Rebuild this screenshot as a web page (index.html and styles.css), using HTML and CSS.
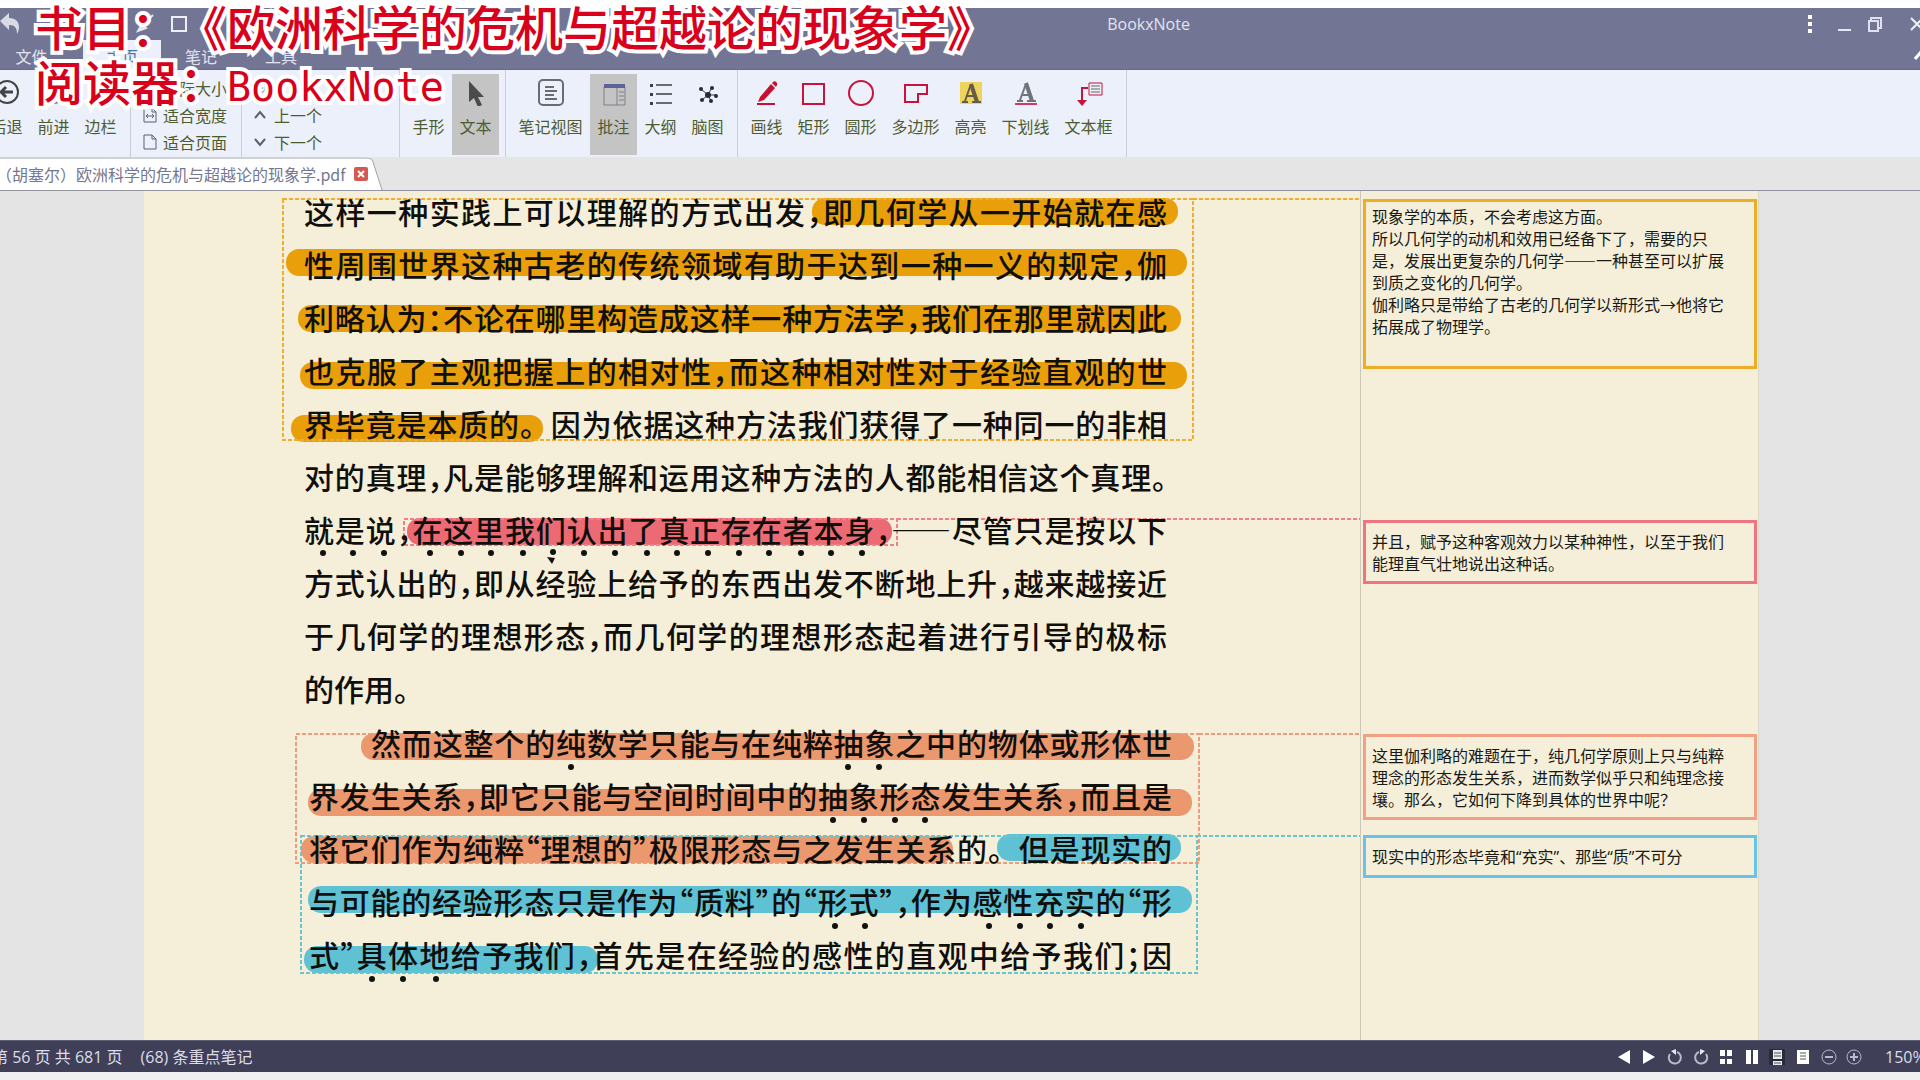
FILE: index.html
```html
<!DOCTYPE html>
<html lang="zh-CN">
<head>
<meta charset="utf-8">
<title>BookxNote</title>
<link rel="stylesheet" href="styles.css">
</head>
<body>
<header class="titlebar">
  <div class="caption-row">
    <div class="quick">
      <button class="bare" aria-label="撤销"><svg width="20" height="22" viewBox="0 0 20 22"><path d="M0 8L9 0v5c7 0 10 4 10 9 0 3-1 5-2 7 0-6-2-9-8-9v5z" fill="#d9dae6"/></svg></button>
      <button class="bare" aria-label="画笔"><svg width="18" height="20" viewBox="0 0 18 20"><path d="M17 1L9 9M2 17l4-7 4 4z" stroke="#e4e5ef" stroke-width="2" fill="#e4e5ef"/></svg></button>
      <button class="bare" aria-label="矩形"><svg width="18" height="18" viewBox="0 0 18 18"><rect x="2" y="2" width="14" height="14" fill="none" stroke="#eef0f8" stroke-width="2"/></svg></button>
    </div>
    <h1 class="app-name">BookxNote</h1>
    <div class="window-controls">
      <button class="bare" aria-label="菜单"><svg width="8" height="20" viewBox="0 0 8 20"><path d="M2 1h4v4H2zM2 8h4v4H2zM2 15h4v4H2z" fill="#fff"/></svg></button>
      <button class="bare" aria-label="最小化"><svg width="14" height="18" viewBox="0 0 14 18"><path d="M0 15h13" stroke="#e6e8f2" stroke-width="2"/></svg></button>
      <button class="bare" aria-label="还原"><svg width="14" height="18" viewBox="0 0 14 18"><path d="M1 6h9v10H1zM3 5V3h10v10h-2" fill="none" stroke="#dfe1ee" stroke-width="2"/></svg></button>
      <button class="bare" aria-label="关闭"><svg width="14" height="14" viewBox="0 0 14 14"><path d="M1 1l12 12M13 1L1 13" stroke="#eef0f8" stroke-width="2"/></svg></button>
    </div>
  </div>
  <nav class="menu">
    <a href="#file">文件</a><a href="#home" class="active">主页</a><a href="#notes">笔记</a><a href="#tools">工具</a>
    <button class="bare collapse" aria-label="收起"><svg width="14" height="10" viewBox="0 0 14 10"><path d="M1 9l6-7 6 7" fill="none" stroke="#fff" stroke-width="3"/></svg></button>
  </nav>
</header>

<div class="toolbar">
  <div class="group first">
    <button class="tool"><svg width="28" height="28" viewBox="0 0 28 28"><circle cx="14" cy="14" r="11" fill="none" stroke="#444" stroke-width="2"/><path d="M20 14H9M13 9l-5 5 5 5" fill="none" stroke="#444" stroke-width="3"/></svg>后退</button>
    <button class="tool"><svg width="28" height="28" viewBox="0 0 28 28"><circle cx="14" cy="14" r="11" fill="none" stroke="#888" stroke-width="2"/><path d="M8 14h11M15 9l5 5-5 5" fill="none" stroke="#888" stroke-width="3"/></svg>前进</button>
    <button class="tool"><svg width="28" height="28" viewBox="0 0 28 28"><path d="M4 5h20v19H4zM10 5v19" fill="none" stroke="#777" stroke-width="2"/></svg>边栏</button>
  </div>
  <div class="group stack fit">
    <button class="row"><svg width="14" height="16" viewBox="0 0 14 16"><path d="M1 1h8l4 4v10H1z" fill="none" stroke="#5a6072"/></svg>实际大小</button>
    <button class="row"><svg width="14" height="16" viewBox="0 0 14 16"><path d="M1 1h8l4 4v10H1zM9 1v4h4M3 9h8M5 7L3 9l2 2M9 7l2 2-2 2" fill="none" stroke="#5a6072"/></svg>适合宽度</button>
    <button class="row"><svg width="14" height="16" viewBox="0 0 14 16"><path d="M1 1h8l4 4v10H1zM9 1v4h4" fill="none" stroke="#5a6072"/></svg>适合页面</button>
  </div>
  <div class="group stack step">
    <button class="row" aria-label="缩小"><svg width="12" height="12" viewBox="0 0 12 12"><circle cx="6" cy="6" r="5" fill="none" stroke="#7389a8"/><path d="M3 6h6" stroke="#7389a8"/></svg></button>
    <button class="row"><svg width="12" height="12" viewBox="0 0 12 12"><path d="M1 9l5-6 5 6" fill="none" stroke="#5a6072" stroke-width="2"/></svg>上一个</button>
    <button class="row"><svg width="12" height="12" viewBox="0 0 12 12"><path d="M1 3l5 6 5-6" fill="none" stroke="#5a6072" stroke-width="2"/></svg>下一个</button>
  </div>
  <div class="group">
    <button class="tool"><svg width="28" height="28" viewBox="0 0 28 28"><path d="M8 20c2 7 11 7 13 0V9M8 20L4 13M10 15V6M14 13V4M18 13V6" fill="none" stroke="#777" stroke-width="2"/></svg>手形</button>
    <button class="tool on"><svg width="28" height="28" viewBox="0 0 28 28"><path d="M7 3v21l5-4 4 9 4-2-4-8h6z" fill="#4b4b4b"/></svg>文本</button>
  </div>
  <div class="group">
    <button class="tool w4"><svg width="28" height="28" viewBox="0 0 28 28"><rect x="2" y="2" width="24" height="25" rx="4" fill="none" stroke="#6a6c72" stroke-width="2"/><path d="M8 9h9M8 13h12M8 17h9M8 21h12" stroke="#6a6c72" stroke-width="2"/></svg>笔记视图</button>
    <button class="tool on"><svg width="28" height="28" viewBox="0 0 28 28"><path d="M4 9h21v18H4zM17 9v18M19 14h5M19 18h5M19 22h5" fill="none" stroke="#808088"/><path d="M4 6h21v4H4z" fill="#5f6296"/></svg>批注</button>
    <button class="tool"><svg width="28" height="28" viewBox="0 0 28 28"><path d="M9 7h16M9 16h16M9 25h16" stroke="#696b70" stroke-width="2"/><path d="M3 6h3v3H3zM3 15h3v3H3zM3 24h3v3H3z" fill="#3d3f45"/></svg>大纲</button>
    <button class="tool"><svg width="28" height="28" viewBox="0 0 28 28"><path d="M7 11l7 6 4-8M22 17h-8l3 6M8 22l6-5" stroke="#333840" fill="none"/><g fill="#252a33"><circle cx="14" cy="17" r="3"/><circle cx="7" cy="11" r="2"/><circle cx="18" cy="10" r="2"/><circle cx="22" cy="18" r="2"/><circle cx="17" cy="23" r="2"/><circle cx="8" cy="22" r="2"/></g></svg>脑图</button>
  </div>
  <div class="group">
    <button class="tool"><svg width="28" height="28" viewBox="0 0 28 28"><path d="M7 19L18 6l4 4-11 12-6 2zM19 5l1-1c2-2 5 1 4 3l-1 2z" fill="#c8102e"/><path d="M4 26h18" stroke="#c8102e" stroke-width="2"/></svg>画线</button>
    <button class="tool"><svg width="28" height="28" viewBox="0 0 28 28"><rect x="3" y="6" width="21" height="20" fill="none" stroke="#c8143c" stroke-width="2"/></svg>矩形</button>
    <button class="tool"><svg width="28" height="28" viewBox="0 0 28 28"><circle cx="14" cy="15" r="12" fill="none" stroke="#c8143c" stroke-width="2"/></svg>圆形</button>
    <button class="tool w3"><svg width="28" height="28" viewBox="0 0 28 28"><path d="M3 7h22v9h-9v8H3z" fill="none" stroke="#c8143c" stroke-width="2"/></svg>多边形</button>
    <button class="tool"><svg width="28" height="28" viewBox="0 0 28 28"><path d="M3 4h22v22H3z" fill="#eed45c"/><path d="M5 24h6M15 24h9M8 23l6-17M10 18h8" fill="none" stroke="#665d48" stroke-width="2"/><path d="M14 6l6 18" stroke="#665d48" stroke-width="4"/></svg>高亮</button>
    <button class="tool w3"><svg width="28" height="28" viewBox="0 0 28 28"><path d="M5 23h6M15 23h9M8 22l6-16M10 17h8" fill="none" stroke="#70737a" stroke-width="2"/><path d="M14 5l6 18" stroke="#70737a" stroke-width="4"/><path d="M3 26h22" stroke="#d9365a" stroke-width="2"/></svg>下划线</button>
    <button class="tool w3"><svg width="28" height="28" viewBox="0 0 28 28"><path d="M14 5h13v12H14z" fill="none" stroke="#c8143c"/><path d="M16 8h9M16 11h9M16 14h9" stroke="#666"/><path d="M13 10H7v13" fill="none" stroke="#c8143c" stroke-width="2"/><path d="M2 22h10l-5 6z" fill="#c8143c"/></svg>文本框</button>
  </div>
</div>

<div class="tabs">
  <div class="tab">
    <svg class="tab-shape" width="384" height="33" viewBox="0 0 384 33"><path d="M0 0h366c4 0 6 2 7 5l9 28H0z" fill="#fff"/><path d="M0 1h366c4 0 6 1 7 4l9 28" fill="none" stroke="#a2a3ac"/></svg>
    <a href="#doc" class="tab-name">（胡塞尔）欧洲科学的危机与超越论的现象学.pdf</a>
    <button class="bare tab-close" aria-label="关闭标签"><svg width="14" height="14" viewBox="0 0 14 14"><rect width="14" height="14" rx="2" fill="#d25a50"/><path d="M4 4l6 6M10 4l-6 6" stroke="#fff" stroke-width="2"/></svg></button>
  </div>
</div>

<main class="viewport">
  <article class="page">
    <svg class="marks" width="1217" height="848" viewBox="144 192 1217 848">
      <g fill="#e99f0a"><rect x="812" y="198" width="366" height="27" rx="13"/><rect x="286" y="249" width="901" height="27" rx="13"/><rect x="298" y="305" width="883" height="27" rx="13"/><rect x="300" y="362" width="887" height="27" rx="13"/><rect x="291" y="415" width="252" height="27" rx="13"/></g>
      <rect x="407" y="518" width="485" height="27" rx="13" fill="#ec6a74"/>
      <g fill="#eb986e"><rect x="361" y="733" width="833" height="27" rx="13"/><rect x="308" y="789" width="884" height="27" rx="13"/><rect x="301" y="836" width="652" height="27" rx="13"/></g>
      <g fill="#5fc2d4"><rect x="997" y="834" width="184" height="27" rx="13"/><rect x="308" y="886" width="884" height="27" rx="13"/><rect x="304" y="946" width="294" height="27" rx="13"/></g>
      <g fill="none" stroke-width="2" stroke-dasharray="4 2">
        <path d="M283 199h910v241H283zM1193 199h168" stroke="#eeae35"/>
        <path d="M404 519h493v26H404zM897 519h464" stroke="#ef8088"/>
        <path d="M296 734h903v129H296zM1199 734h162" stroke="#ee9c7c"/>
        <path d="M301 836h896v137H301zM1197 836h164" stroke="#67c7cf"/>
      </g>
      <g fill="#111">
        <circle cx="323" cy="553" r="3"/><circle cx="353" cy="553" r="3"/><circle cx="384" cy="553" r="3"/><circle cx="430" cy="553" r="3"/><circle cx="461" cy="553" r="3"/><circle cx="491" cy="553" r="3"/><circle cx="523" cy="553" r="3"/><circle cx="553" cy="552" r="3"/><circle cx="584" cy="553" r="3"/><circle cx="615" cy="553" r="3"/><circle cx="647" cy="553" r="3"/><circle cx="677" cy="553" r="3"/><circle cx="708" cy="553" r="3"/><circle cx="739" cy="553" r="3"/><circle cx="769" cy="553" r="3"/><circle cx="801" cy="553" r="3"/><circle cx="831" cy="553" r="3"/><circle cx="862" cy="553" r="3"/><path d="M547 557l8 1-3 6z"/>
        <circle cx="571" cy="767" r="3"/><circle cx="848" cy="767" r="3"/><circle cx="879" cy="767" r="3"/>
        <circle cx="833" cy="820" r="3"/><circle cx="864" cy="820" r="3"/><circle cx="895" cy="820" r="3"/><circle cx="925" cy="820" r="3"/>
        <circle cx="835" cy="926" r="3"/><circle cx="865" cy="926" r="3"/><circle cx="989" cy="926" r="3"/><circle cx="1020" cy="926" r="3"/><circle cx="1050" cy="926" r="3"/><circle cx="1081" cy="926" r="3"/>
        <circle cx="372" cy="979" r="3"/><circle cx="403" cy="979" r="3"/><circle cx="436" cy="979" r="3"/>
      </g>
    </svg>
    <p class="para lead">
      <span class="line">这样一种实践上可以理解的方式出发，即几何学从一开始就在感</span>
      <span class="line">性周围世界这种古老的传统领域有助于达到一种一义的规定，伽</span>
      <span class="line">利略认为：不论在哪里构造成这样一种方法学，我们在那里就因此</span>
      <span class="line">也克服了主观把握上的相对性，而这种相对性对于经验直观的世</span>
      <span class="line">界毕竟是本质的<span class="stop">。</span>因为依据这种方法我们获得了一种同一的非相</span>
      <span class="line">对的真理，凡是能够理解和运用这种方法的人都能相信这个真理。</span>
      <span class="line">就是说，在这里我们认出了真正存在者本身，——尽管只是按以下</span>
      <span class="line">方式认出的，即从经验上给予的东西出发不断地上升，越来越接近</span>
      <span class="line">于几何学的理想形态，而几何学的理想形态起着进行引导的极标</span>
      <span class="line last">的作用。</span>
    </p>
    <p class="para">
      <span class="line indent">然而这整个的纯数学只能与在纯粹抽象之中的物体或形体世</span>
      <span class="line">界发生关系，即它只能与空间时间中的抽象形态发生关系，而且是</span>
      <span class="line">将它们作为纯粹“理想的”极限形态与之发生关系的<span class="stop">。</span>但是现实的</span>
      <span class="line">与可能的经验形态只是作为“质料”的“形式”，作为感性充实的“形</span>
      <span class="line">式”具体地给予我们，首先是在经验的感性的直观中给予我们；因</span>
    </p>
  </article>
  <aside class="notes">
    <section class="note amber">现象学的本质，不会考虑这方面。<br>所以几何学的动机和效用已经备下了，需要的只是，发展出更复杂的几何学——一种甚至可以扩展到质之变化的几何学。<br>伽利略只是带给了古老的几何学以新形式→他将它拓展成了物理学。</section>
    <section class="note red">并且，赋予这种客观效力以某种神性，以至于我们能理直气壮地说出这种话。</section>
    <section class="note coral">这里伽利略的难题在于，纯几何学原则上只与纯粹理念的形态发生关系，进而数学似乎只和纯理念接壤。那么，它如何下降到具体的世界中呢？</section>
    <section class="note blue">现实中的形态毕竟和<span class="latin">“</span>充实<span class="latin">”</span>、那些<span class="latin">“</span>质<span class="latin">”</span>不可分</section>
  </aside>
</main>

<footer class="status">
  <span class="pages">第 56 页 共 681 页</span>
  <span>(68) 条重点笔记</span>
  <div class="view-tools">
    <button class="bare" aria-label="上一页"><svg width="16" height="16" viewBox="0 0 16 16"><path d="M14 1v14L2 8z" fill="#fff"/></svg></button>
    <button class="bare" aria-label="下一页"><svg width="16" height="16" viewBox="0 0 16 16"><path d="M2 1v14l12-7z" fill="#fff"/></svg></button>
    <button class="bare" aria-label="左旋"><svg width="16" height="16" viewBox="0 0 16 16"><path d="M10 3a6 6 0 1 1-7 2" fill="none" stroke="#b9b9c9" stroke-width="2"/><path d="M4 2l5-2v6z" fill="#e8e8f0"/></svg></button>
    <button class="bare" aria-label="右旋"><svg width="16" height="16" viewBox="0 0 16 16"><path d="M6 3a6 6 0 1 0 7 2" fill="none" stroke="#b9b9c9" stroke-width="2"/><path d="M12 2L7 0v6z" fill="#e8e8f0"/></svg></button>
    <button class="bare" aria-label="缩略图"><svg width="16" height="16" viewBox="0 0 16 16"><path d="M2 1h5v6H2zM9 1h5v6H9zM2 10h5v5H2zM9 10h5v5H9z" fill="#fff"/></svg></button>
    <button class="bare" aria-label="双页"><svg width="16" height="16" viewBox="0 0 16 16"><path d="M2 1h5v14H2zM9 1h5v14H9z" fill="#fff"/></svg></button>
    <button class="bare" aria-label="连续"><svg width="16" height="16" viewBox="0 0 16 16"><path d="M0 0h16v16H0z" fill="#2a2a38"/><path d="M4 1h9v9H4zM4 12h9v4H4z" fill="#e8e8f0"/><path d="M5 4h7M5 7h7M5 14h7" stroke="#555"/></svg></button>
    <button class="bare" aria-label="单页"><svg width="16" height="16" viewBox="0 0 16 16"><path d="M2 1h12v14H2z" fill="#fff"/><path d="M5 4h6M5 7h6M5 10h6" stroke="#555"/></svg></button>
    <button class="bare" aria-label="缩小"><svg width="16" height="16" viewBox="0 0 16 16"><circle cx="8" cy="8" r="7" fill="none" stroke="#b9b9c9"/><path d="M4 8h8" stroke="#b9b9c9" stroke-width="2"/></svg></button>
    <button class="bare" aria-label="放大"><svg width="16" height="16" viewBox="0 0 16 16"><circle cx="8" cy="8" r="7" fill="none" stroke="#b9b9c9"/><path d="M4 8h8M8 4v8" stroke="#b9b9c9" stroke-width="2"/></svg></button>
  </div>
  <span class="zoom">150%</span>
</footer>

<div class="subtitle">
  <p>书目：《欧洲科学的危机与超越论的现象学》</p>
  <p>阅读器：<span class="mono">BookxNote</span></p>
</div>
</body>
</html>
```
FILE: styles.css
```css
* { box-sizing: border-box; }
body {
  margin: 0;
  padding: 8px 0;
  min-height: 100vh;
  display: flex;
  flex-direction: column;
  position: relative;
  overflow: hidden;
  background: linear-gradient(#fff 50%, #f0f0f0 50%);
  font: 16px/22px "Noto Sans CJK SC", sans-serif;
}
p, h1 { margin: 0; }
svg { display: block; flex: none; }
a { color: inherit; text-decoration: none; }
button { font: inherit; color: inherit; border: 0; background: none; padding: 0; white-space: nowrap; }
.bare { display: flex; align-items: center; justify-content: center; }

/* Title bar */
.titlebar { background: #737595; border-bottom: 1px solid #696b85; height: 62px; color: #e1e3f0; }
.caption-row { display: flex; align-items: center; height: 32px; }
.quick { display: flex; align-items: center; flex: 1104; gap: 16px; }
.quick .bare:first-child { margin-right: 100px; }
.app-name { font: 16px/22px "Open Sans", sans-serif; flex: none; }
.window-controls { flex: 732; display: flex; justify-content: flex-end; align-items: center; gap: 24px; margin-right: -4px; }
.window-controls .bare:nth-child(3) { margin: 0 4px 0 -8px; }
.menu { display: flex; align-items: center; height: 29px; }
.menu a { width: 80px; height: 30px; line-height: 32px; text-align: center; }
.menu a:first-child { width: 83px; padding-right: 20px; }
.menu .active { width: 78px; background: #ecf0fa; color: #467aa3; }
.collapse { margin: 0 -8px 0 auto; }

/* Toolbar */
.toolbar { display: flex; height: 87px; background: #ecf0fa; color: #4f5c30; }
.group { display: flex; padding: 4px 6px 2px 5px; border-right: 1px solid #c9ccd6; }
.group.first { padding-left: 0; margin-left: -17px; }
.tool { width: 47px; display: flex; flex-direction: column; align-items: center; gap: 9px; padding-top: 4px; }
.tool.w3 { width: 63px; }
.tool.w4 { width: 79px; }
.tool.on { background: #c4c4c4; }
.group.stack { flex-direction: column; padding: 4px 0 0 12px; }
.row { height: 27px; display: flex; align-items: center; gap: 6px; }
.fit { width: 111px; }
.step { width: 158px; }
.step .row { gap: 8px; }

/* Document tabs */
.tabs { height: 34px; background: #e5e5e5; border-bottom: 1px solid #92939f; }
.tab { position: relative; display: flex; align-items: center; gap: 8px; height: 33px; width: 384px; color: #757791; }
.tab-shape { position: absolute; left: 0; top: 0; }
.tab-name { position: relative; margin-left: -4px; white-space: nowrap; }
.tab-close { position: relative; }

/* Reading area */
.viewport { flex: 1; display: grid; grid-template-columns: 1fr 398px; padding: 1px 161px 0 144px; background: #e4e4e5; overflow: hidden; }
.page { position: relative; background: #f5efd9; border-right: 1px solid #cdc8b8; margin-top: -1px; overflow: hidden; }
.marks { position: absolute; left: 0; top: 1px; }
.para { position: relative; width: 863px; margin: 1px 0 0 165px; font-size: 30px; line-height: 53px; color: #100f0c; font-weight: 500; font-feature-settings: "halt"; }
.para.lead { margin: -6px 0 0 160px; }
.line { display: block; white-space: nowrap; text-align: justify; text-align-last: justify; }
.line.last { text-align-last: left; }
.line.indent { padding-left: 62px; }
.stop { font-feature-settings: "halt" 0; }

/* Margin notes, each row starts level with its highlight */
.notes { background: #f5efd9; border-right: 1px solid #dcd8c8; padding: 8px 1px 0 2px; margin-top: -1px; display: grid; grid-template-rows: 321px 214px 101px auto; align-items: start; align-content: start; }
.note { border: 3px solid; padding: 7px 27px 7px 6px; color: #191917; }
.amber { border-color: #ecae24; padding-top: 3px; padding-bottom: 29px; }
.red { border-color: #ee7480; }
.coral { border-color: #f0a083; }
.blue { border-color: #68c3ec; }
.latin { font-family: "Open Sans", sans-serif; }

/* Status bar */
.status { height: 32px; display: flex; align-items: center; background: #403f58; border-top: 1px solid #5c5c74; color: #dcdde9; font-family: "Open Sans", "Noto Sans CJK SC", sans-serif; white-space: nowrap; }
.pages { margin: 0 18px 0 -8px; }
.view-tools { margin-left: auto; width: 256px; display: grid; grid-template-columns: repeat(10, 1fr); }
.zoom { width: 35px; margin-left: 18px; }

/* Video caption over the window */
.subtitle { position: absolute; left: 35px; top: -2px; font-size: 48px; line-height: 55px; font-weight: 500; color: #d9001b; white-space: nowrap; text-spacing-trim: space-all; -webkit-text-stroke: 8px #fff; paint-order: stroke fill; }
.mono { font-family: "DejaVu Sans Mono", monospace; font-size: 40px; }
```
